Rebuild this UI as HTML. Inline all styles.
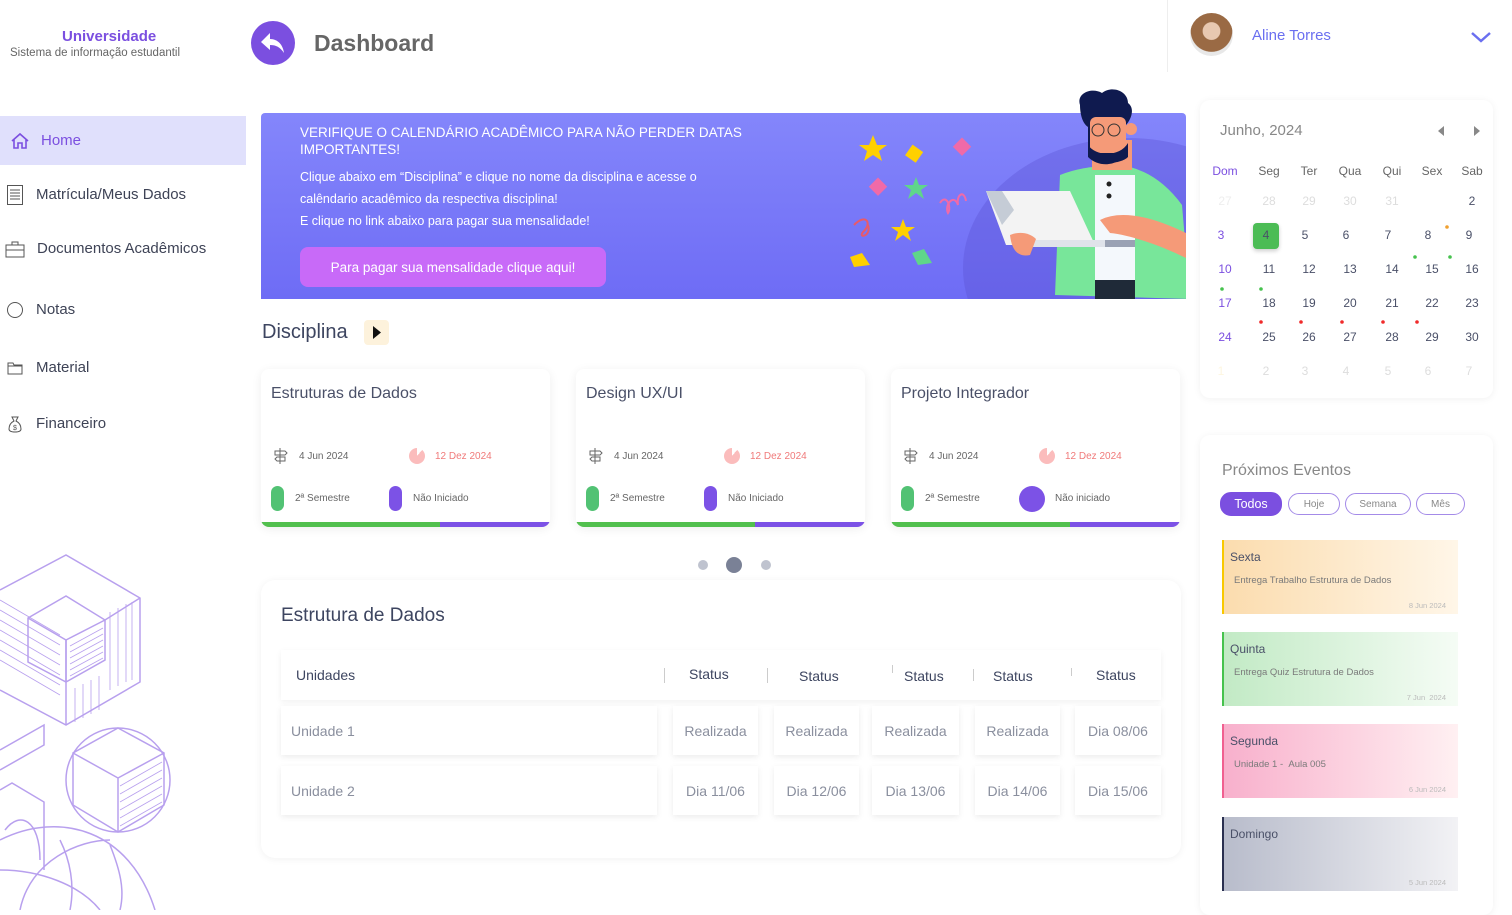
<!DOCTYPE html>
<html><head><meta charset="utf-8"><style>
*{margin:0;padding:0;box-sizing:border-box}
body{width:1512px;height:910px;overflow:hidden;background:#fff;font-family:"Liberation Sans",sans-serif;color:#4a5068;position:relative}
.a{position:absolute;white-space:nowrap}
.nav{position:absolute;left:0;width:246px;height:49px;display:flex;align-items:center;font-size:15px;color:#3e4356}
.card{position:absolute;top:369px;width:289px;height:158px;background:#fff;border-radius:8px;box-shadow:0 2px 10px rgba(0,0,0,.07);overflow:hidden}
.card .t{position:absolute;left:10px;top:16px;font-size:16px;color:#4a5068}
.card .d1{position:absolute;left:38px;top:82px;font-size:10px;color:#666}
.card .d2{position:absolute;left:174px;top:82px;font-size:10px;color:#f07a7a}
.card .s1{position:absolute;left:34px;top:124px;font-size:10px;color:#666}
.card .s2{position:absolute;left:152px;top:124px;font-size:10px;color:#666}
.card .pg{position:absolute;left:10px;top:117px;width:13px;height:25px;border-radius:7px;background:#52c274}
.card .pp{position:absolute;left:128px;top:117px;width:13px;height:25px;border-radius:7px;background:#7c52e6}
.card .bar{position:absolute;left:0;bottom:0;width:100%;height:5px;background:linear-gradient(90deg,#52c04e 62%,#7c52e6 62%)}
.card .ic{position:absolute;left:12px;top:78px}
.card .pie{position:absolute;left:148px;top:79px;width:16px;height:16px;border-radius:50%;background:conic-gradient(transparent 0 40deg,#fbbcbc 40deg)}
.cell{position:absolute;background:#fff;box-shadow:0 2px 6px rgba(0,0,0,.08);font-size:14px;color:#8a8f9e;display:flex;align-items:center;justify-content:center}
.cal{position:absolute;font-size:12px;color:#4a5068;text-align:center;width:30px}
.ev{position:absolute;left:1222px;width:236px;height:74px}
.ev .h{position:absolute;left:6px;top:10px;font-size:12px;color:#4a5068}
.ev .s{position:absolute;left:10px;top:35px;font-size:9.5px;color:#7a7a7a}
.ev .dt{position:absolute;right:12px;top:61px;font-size:7.5px;color:#bbb}
.pill{position:absolute;top:493px;height:22px;border:1px solid #a48be8;border-radius:11px;font-size:10px;color:#888;display:flex;align-items:center;justify-content:center}
</style></head><body>

<div class="a" style="left:62px;top:28px;font-size:15px;font-weight:bold;color:#7b4fe0">Universidade</div>
<div class="a" style="left:10px;top:47px;font-size:11.5px;color:#666">Sistema de informação estudantil</div>
<div class="a" style="left:251px;top:21px;width:44px;height:44px;border-radius:50%;background:#7b4fe0"></div>
<svg class="a" style="left:259px;top:31px" width="28" height="24" viewBox="0 0 28 24"><path d="M11 2 L2 11 L11 19 L11 14 C17 14 21 16 25 22 C24 14 19 8 11 8 Z" fill="#fff"/></svg>
<div class="a" style="left:314px;top:30px;font-size:23px;font-weight:bold;color:#666">Dashboard</div>

<div class="a" style="left:1167px;top:0;width:1px;height:72px;background:#eee"></div>
<div class="a" style="left:1190px;top:13px;width:43px;height:43px;border-radius:50%;background:radial-gradient(circle at 50% 42%,#e8c8b0 0 26%,#9a6a44 28% 62%,#e8e8e8 64%)"></div>
<div class="a" style="left:1252px;top:27px;font-size:15px;color:#6a6ff0">Aline Torres</div>
<svg class="a" style="left:1470px;top:30px" width="22" height="14"><path d="M2 3 L11 11 L20 3" stroke="#6a6ff0" stroke-width="2.5" fill="none"/></svg>

<div class="nav" style="top:116px;background:#e0e0fc;color:#7b4fe0"><svg style="margin:0 11px 0 10px" width="20" height="18" viewBox="0 0 20 18"><path d="M2 9 L10 2 L18 9 M4 7 V16 H8 V11 H12 V16 H16 V7" stroke="#7b4fe0" stroke-width="1.6" fill="none"/></svg>Home</div>
<div class="nav" style="top:170px"><svg style="margin:0 12px 0 6px" width="18" height="22"><rect x="1.5" y="1.5" width="15" height="19" stroke="#555" fill="none"/><path d="M4 6H14M4 9H14M4 12H14M4 15H14" stroke="#555"/></svg>Matrícula/Meus Dados</div>
<div class="nav" style="top:224px"><svg style="margin:0 12px 0 5px" width="20" height="18"><rect x="1" y="5" width="18" height="12" stroke="#555" fill="none"/><path d="M7 5V2H13V5M1 10H19" stroke="#555" fill="none"/></svg>Documentos Acadêmicos</div>
<div class="nav" style="top:285px"><svg style="margin:0 12px 0 6px" width="18" height="18"><circle cx="9" cy="9" r="7.5" stroke="#555" fill="none"/></svg>Notas</div>
<div class="nav" style="top:343px"><svg style="margin:0 13px 0 7px" width="16" height="14"><path d="M1 2H6L7 4H15V13H1Z M1 5H15" stroke="#555" fill="none"/></svg>Material</div>
<div class="nav" style="top:399px"><svg style="margin:0 14px 0 8px" width="14" height="18"><path d="M4 2H10L8 6C12 8 13 11 13 14 C13 16 11 17 7 17 C3 17 1 16 1 14 C1 11 2 8 6 6Z" stroke="#555" fill="none"/><text x="5" y="15" font-size="7" fill="#555">$</text></svg>Financeiro</div>

<svg class="a" style="left:0;top:540px" width="200" height="370" viewBox="0 0 200 370" fill="none" stroke="#b8a0ee" stroke-width="1.5">
<path d="M0 50 L66 15 L140 58 L140 142 L66 185 L0 150"/>
<path d="M28 78 L66 56 L105 80 L105 120 L66 142 L28 122 Z M66 100 L105 80 M66 100 L28 78 M66 100 V142"/>
<path d="M66 100 V185 M140 58 L105 80" />
<g stroke-width=".8"><path d="M110 72V150M118 68V146M126 64V142M132 62V140M75 148V182M83 144V178M91 140V174M99 136V170"/><path d="M70 106L103 88M70 112L103 94M70 118L103 100M70 124L103 106M70 130L103 112M70 136L103 118"/><path d="M0 60L60 95M0 70L60 105M0 80L60 115M0 90L60 125M0 100L60 135M0 110L60 145M0 120L60 155"/></g>
<circle cx="118" cy="240" r="52"/>
<path d="M118 188 L164 213 L164 265 L118 292 L73 265 L73 213 Z M118 238 L164 213 M118 238 L73 213 M118 238 V292"/>
<g stroke-width=".8"><path d="M120 246L162 222M120 254L162 230M120 262L162 238M120 270L162 246M120 278L162 254M120 286L162 262"/></g>
<path d="M0 210 L44 185 L44 205 L0 230 M0 250 L12 243 L44 262 L44 330"/>
<path d="M0 300 C60 270 130 290 155 370 M20 370 C30 320 80 300 110 300 M0 330 C40 330 80 345 100 370 M60 300 C70 320 75 345 70 370 M110 305 C120 330 125 350 120 370"/>
<path d="M5 290 C20 270 40 280 40 320" />
</svg>

<div class="a" style="left:261px;top:113px;width:925px;height:186px;background:linear-gradient(180deg,#8486fb,#6e6cf5);border-radius:4px 4px 0 0;overflow:hidden">
<div class="a" style="left:702px;top:25px;width:330px;height:260px;border-radius:50%;background:rgba(90,80,210,.35)"></div>
</div>
<div class="a" style="left:300px;top:124px;font-size:13.5px;color:#fff;line-height:17px;white-space:normal;width:500px">VERIFIQUE O CALENDÁRIO ACADÊMICO PARA NÃO PERDER DATAS IMPORTANTES!</div>
<div class="a" style="left:300px;top:166px;font-size:12.5px;color:#fff;line-height:22px;white-space:normal;width:450px">Clique abaixo em “Disciplina” e clique no nome da disciplina e acesse o calêndario acadêmico da respectiva disciplina!<br>E clique no link abaixo para pagar sua mensalidade!</div>
<div class="a" style="left:300px;top:247px;width:306px;height:40px;border-radius:8px;background:#c86af8;color:#fff;font-size:13.5px;display:flex;align-items:center;justify-content:center">Para pagar sua mensalidade clique aqui!</div>
<svg class="a" style="left:830px;top:85px" width="356" height="214" viewBox="0 0 356 214">
<polygon points="43,50 47,60 57,60 49,66 52,76 43,70 34,76 37,66 29,60 39,60" fill="#ffd000"/>
<rect x="78" y="62" width="13" height="13" fill="#ffd000" transform="rotate(35 84 68)"/>
<rect x="126" y="55" width="13" height="13" fill="#f06aa8" transform="rotate(45 132 61)"/>
<rect x="42" y="95" width="13" height="13" fill="#f06aa8" transform="rotate(45 48 101)"/>
<polygon points="86,92 89,100 98,100 91,105 94,114 86,108 78,114 81,105 74,100 83,100" fill="#5fd68a"/>
<polygon points="73,134 76,142 85,142 78,147 81,156 73,150 65,156 68,147 61,142 70,142" fill="#ffd000"/>
<polygon points="20,172 32,168 40,180 24,182" fill="#ffd000"/>
<polygon points="82,168 94,164 102,178 88,180" fill="#5fd68a"/>
<path d="M110 118 C116 108 122 122 118 128 C114 120 124 108 128 120 C126 110 134 104 136 116" stroke="#f06aa8" stroke-width="2" fill="none"/>
<path d="M24 140 C36 128 42 138 34 146 C26 154 42 152 38 140" stroke="#e85a6a" stroke-width="2" fill="none"/>
<path d="M225 210 L230 90 Q260 78 300 82 Q330 90 352 120 L360 214 Z" fill="#78e69a"/>
<rect x="265" y="90" width="40" height="120" fill="#f4f8fc"/>
<rect x="265" y="195" width="40" height="20" fill="#1f2a38"/>
<circle cx="279" cy="99" r="2.5" fill="#222"/><circle cx="279" cy="111" r="2.5" fill="#222"/>
<rect x="262" y="55" width="40" height="30" fill="#f59a78"/>
<path d="M250 20 C246 8 262 2 272 8 C282 0 298 6 298 18 C306 24 300 36 296 40 L296 68 C290 80 270 84 258 72 L258 42 C252 38 250 28 250 20Z" fill="#0f1a4f"/>
<rect x="260" y="32" width="36" height="36" rx="6" fill="#f59a78"/>
<circle cx="268" cy="45" r="6" stroke="#333" fill="none"/><circle cx="284" cy="45" r="6" stroke="#333" fill="none"/>
<path d="M258 60 C266 72 290 72 298 58 L298 72 C290 80 266 80 258 70Z" fill="#0f1a4f"/>
<circle cx="301" cy="44" r="6" fill="#f59a78"/>
<polygon points="156,106 240,106 265,160 176,160" fill="#f3f3f3"/>
<polygon points="156,106 172,106 184,125 172,140" fill="#c5ccd6"/>
<rect x="190" y="155" width="115" height="7" fill="#dfe3ea"/><rect x="275" y="155" width="30" height="7" fill="#9aa2b4"/>
<path d="M270 135 C290 125 320 130 360 150 L360 175 C330 160 300 150 280 148Z" fill="#f59a78"/>
<path d="M180 150 C190 146 200 148 206 154 L200 170 C190 172 182 168 180 150Z" fill="#f59a78"/>
</svg>

<div class="a" style="left:262px;top:321px;font-size:20px;color:#3d4560">Disciplina</div>
<div class="a" style="left:364px;top:320px;width:25px;height:25px;border-radius:4px;background:#fdf2dc"></div>
<svg class="a" style="left:372px;top:325px" width="10" height="15"><path d="M1 1 L9 7.5 L1 14Z" fill="#111"/></svg>

<div class="card" style="left:261px"><div class="t">Estruturas de Dados</div>
<svg class="ic" width="16" height="18"><path d="M7 1V17M2 4H12L14 6L12 8H2Z M4 10H12V14H4L2 12Z" stroke="#666" fill="none"/></svg><div class="pie"></div>
<div class="d1">4 Jun 2024</div><div class="d2">12 Dez 2024</div>
<div class="pg"></div><div class="pp"></div><div class="s1">2ª Semestre</div><div class="s2">Não Iniciado</div><div class="bar"></div></div>
<div class="card" style="left:576px"><div class="t">Design UX/UI</div>
<svg class="ic" width="16" height="18"><path d="M7 1V17M2 4H12L14 6L12 8H2Z M4 10H12V14H4L2 12Z" stroke="#666" fill="none"/></svg><div class="pie"></div>
<div class="d1">4 Jun 2024</div><div class="d2">12 Dez 2024</div>
<div class="pg"></div><div class="pp"></div><div class="s1">2ª Semestre</div><div class="s2">Não Iniciado</div><div class="bar"></div></div>
<div class="card" style="left:891px"><div class="t">Projeto Integrador</div>
<svg class="ic" width="16" height="18"><path d="M7 1V17M2 4H12L14 6L12 8H2Z M4 10H12V14H4L2 12Z" stroke="#666" fill="none"/></svg><div class="pie"></div>
<div class="d1">4 Jun 2024</div><div class="d2">12 Dez 2024</div>
<div class="pg"></div><div class="pp" style="width:26px;height:26px;border-radius:50%"></div><div class="s1">2ª Semestre</div><div class="s2" style="left:164px">Não iniciado</div><div class="bar"></div></div>

<div class="a" style="left:698px;top:560px;width:10px;height:10px;border-radius:50%;background:#bfc3cf"></div>
<div class="a" style="left:726px;top:557px;width:16px;height:16px;border-radius:50%;background:#7a8196"></div>
<div class="a" style="left:761px;top:560px;width:10px;height:10px;border-radius:50%;background:#bfc3cf"></div>

<div class="a" style="left:261px;top:580px;width:920px;height:278px;border-radius:14px;box-shadow:0 1px 8px rgba(0,0,0,.06);background:#fff"></div>
<div class="a" style="left:281px;top:605px;font-size:19px;color:#3d4560">Estrutura de Dados</div>
<div class="a" style="left:281px;top:650px;width:880px;height:50px;background:#fff;box-shadow:0 2px 6px rgba(0,0,0,.06)"></div>
<div class="a" style="left:296px;top:667px;font-size:14px;color:#3d4560">Unidades</div>
<div class="a" style="left:689px;top:666px;font-size:14px;color:#3d4560">Status</div>
<div class="a" style="left:799px;top:668px;font-size:14px;color:#3d4560">Status</div>
<div class="a" style="left:904px;top:668px;font-size:14px;color:#3d4560">Status</div>
<div class="a" style="left:993px;top:668px;font-size:14px;color:#3d4560">Status</div>
<div class="a" style="left:1096px;top:667px;font-size:14px;color:#3d4560">Status</div>
<div class="a" style="left:664px;top:668px;width:1px;height:15px;background:#ccc"></div>
<div class="a" style="left:767px;top:668px;width:1px;height:15px;background:#ccc"></div>
<div class="a" style="left:892px;top:665px;width:1px;height:8px;background:#ccc"></div>
<div class="a" style="left:973px;top:669px;width:1px;height:12px;background:#ccc"></div>
<div class="a" style="left:1071px;top:668px;width:1px;height:8px;background:#ccc"></div>

<div class="cell" style="left:281px;top:706px;width:376px;height:49px;justify-content:flex-start;padding-left:10px">Unidade 1</div>
<div class="cell" style="left:673px;top:706px;width:85px;height:49px">Realizada</div>
<div class="cell" style="left:774px;top:706px;width:85px;height:49px">Realizada</div>
<div class="cell" style="left:872px;top:706px;width:87px;height:49px">Realizada</div>
<div class="cell" style="left:975px;top:706px;width:85px;height:49px">Realizada</div>
<div class="cell" style="left:1075px;top:706px;width:86px;height:49px">Dia 08/06</div>
<div class="cell" style="left:281px;top:766px;width:376px;height:49px;justify-content:flex-start;padding-left:10px">Unidade 2</div>
<div class="cell" style="left:673px;top:766px;width:85px;height:49px">Dia 11/06</div>
<div class="cell" style="left:774px;top:766px;width:85px;height:49px">Dia 12/06</div>
<div class="cell" style="left:872px;top:766px;width:87px;height:49px">Dia 13/06</div>
<div class="cell" style="left:975px;top:766px;width:85px;height:49px">Dia 14/06</div>
<div class="cell" style="left:1075px;top:766px;width:86px;height:49px">Dia 15/06</div>

<div class="a" style="left:1200px;top:100px;width:293px;height:298px;border-radius:10px;box-shadow:0 1px 8px rgba(0,0,0,.06)"></div>
<div class="a" style="left:1220px;top:122px;font-size:15px;color:#888">Junho, 2024</div>
<svg class="a" style="left:1436px;top:125px" width="46" height="12"><path d="M8 1L2 6L8 11Z M38 1L44 6L38 11Z" fill="#888"/></svg>
<div class="cal" style="left:1210px;top:164px;color:#7b4fe0">Dom</div><div class="cal" style="left:1254px;top:164px;color:#666">Seg</div><div class="cal" style="left:1294px;top:164px;color:#666">Ter</div><div class="cal" style="left:1335px;top:164px;color:#666">Qua</div><div class="cal" style="left:1377px;top:164px;color:#666">Qui</div><div class="cal" style="left:1417px;top:164px;color:#666">Sex</div><div class="cal" style="left:1457px;top:164px;color:#666">Sab</div>
<div class="cal" style="left:1210px;top:194px;color:#eee">27</div><div class="cal" style="left:1254px;top:194px;color:#ddd">28</div><div class="cal" style="left:1294px;top:194px;color:#ddd">29</div><div class="cal" style="left:1335px;top:194px;color:#ddd">30</div><div class="cal" style="left:1377px;top:194px;color:#ddd">31</div><div class="cal" style="left:1457px;top:194px">2</div>
<div class="a" style="left:1253px;top:223px;width:26px;height:26px;border-radius:4px;background:#4cbc55;box-shadow:0 2px 4px rgba(0,0,0,.2)"></div>
<div class="cal" style="left:1206px;top:228px;color:#7b4fe0">3</div><div class="cal" style="left:1251px;top:228px">4</div><div class="cal" style="left:1290px;top:228px">5</div><div class="cal" style="left:1331px;top:228px">6</div><div class="cal" style="left:1373px;top:228px">7</div><div class="cal" style="left:1413px;top:228px">8</div><div class="cal" style="left:1454px;top:228px">9</div>
<div class="cal" style="left:1210px;top:262px;color:#7b4fe0">10</div><div class="cal" style="left:1254px;top:262px">11</div><div class="cal" style="left:1294px;top:262px">12</div><div class="cal" style="left:1335px;top:262px">13</div><div class="cal" style="left:1377px;top:262px">14</div><div class="cal" style="left:1417px;top:262px">15</div><div class="cal" style="left:1457px;top:262px">16</div>
<div class="cal" style="left:1210px;top:296px;color:#7b4fe0">17</div><div class="cal" style="left:1254px;top:296px">18</div><div class="cal" style="left:1294px;top:296px">19</div><div class="cal" style="left:1335px;top:296px">20</div><div class="cal" style="left:1377px;top:296px">21</div><div class="cal" style="left:1417px;top:296px">22</div><div class="cal" style="left:1457px;top:296px">23</div>
<div class="cal" style="left:1210px;top:330px;color:#7b4fe0">24</div><div class="cal" style="left:1254px;top:330px">25</div><div class="cal" style="left:1294px;top:330px">26</div><div class="cal" style="left:1335px;top:330px">27</div><div class="cal" style="left:1377px;top:330px">28</div><div class="cal" style="left:1417px;top:330px">29</div><div class="cal" style="left:1457px;top:330px">30</div>
<div class="cal" style="left:1206px;top:364px;color:#fdf6e0">1</div><div class="cal" style="left:1251px;top:364px;color:#ddd">2</div><div class="cal" style="left:1290px;top:364px;color:#ddd">3</div><div class="cal" style="left:1331px;top:364px;color:#ddd">4</div><div class="cal" style="left:1373px;top:364px;color:#ddd">5</div><div class="cal" style="left:1413px;top:364px;color:#ddd">6</div><div class="cal" style="left:1454px;top:364px;color:#ddd">7</div>
<svg class="a" style="left:1200px;top:200px" width="300" height="130">
<circle cx="247" cy="27" r="1.8" fill="#f0a030"/>
<circle cx="215" cy="57" r="1.8" fill="#46c24e"/><circle cx="250" cy="57" r="1.8" fill="#46c24e"/>
<circle cx="22" cy="89" r="1.8" fill="#46c24e"/><circle cx="61" cy="89" r="1.8" fill="#46c24e"/>
<circle cx="61" cy="122" r="1.8" fill="#f02a2a"/><circle cx="101" cy="122" r="1.8" fill="#f02a2a"/><circle cx="142" cy="122" r="1.8" fill="#f02a2a"/><circle cx="183" cy="122" r="1.8" fill="#f02a2a"/><circle cx="217" cy="122" r="1.8" fill="#f02a2a"/></svg>

<div class="a" style="left:1200px;top:435px;width:293px;height:480px;border-radius:10px;box-shadow:0 1px 8px rgba(0,0,0,.06)"></div>
<div class="a" style="left:1222px;top:462px;font-size:16px;color:#888">Próximos Eventos</div>
<div class="pill" style="left:1220px;top:492px;width:62px;height:24px;background:#7b4fe0;border-color:#7b4fe0;color:#fff;font-size:12.5px">Todos</div>
<div class="pill" style="left:1288px;width:52px">Hoje</div>
<div class="pill" style="left:1345px;width:66px">Semana</div>
<div class="pill" style="left:1416px;width:49px">Mês</div>
<div class="ev" style="top:540px;background:linear-gradient(90deg,#fbdcae,#fff6e8);border-left:2px solid #f8c800"><div class="h">Sexta</div><div class="s">Entrega Trabalho Estrutura de Dados</div><div class="dt">8 Jun 2024</div></div>
<div class="ev" style="top:632px;background:linear-gradient(90deg,#c2eac5,#f5fcf5);border-left:2px solid #46c24e"><div class="h">Quinta</div><div class="s">Entrega Quiz Estrutura de Dados</div><div class="dt">7 Jun &nbsp;2024</div></div>
<div class="ev" style="top:724px;background:linear-gradient(90deg,#f8b0cc,#fff0f2);border-left:2px solid #f06090"><div class="h">Segunda</div><div class="s">Unidade 1 - &nbsp;Aula 005</div><div class="dt">6 Jun 2024</div></div>
<div class="ev" style="top:817px;background:linear-gradient(90deg,#b8bccb,#f2f2f5);border-left:2px solid #2a3050"><div class="h">Domingo</div><div class="dt">5 Jun 2024</div></div>
</body></html>
